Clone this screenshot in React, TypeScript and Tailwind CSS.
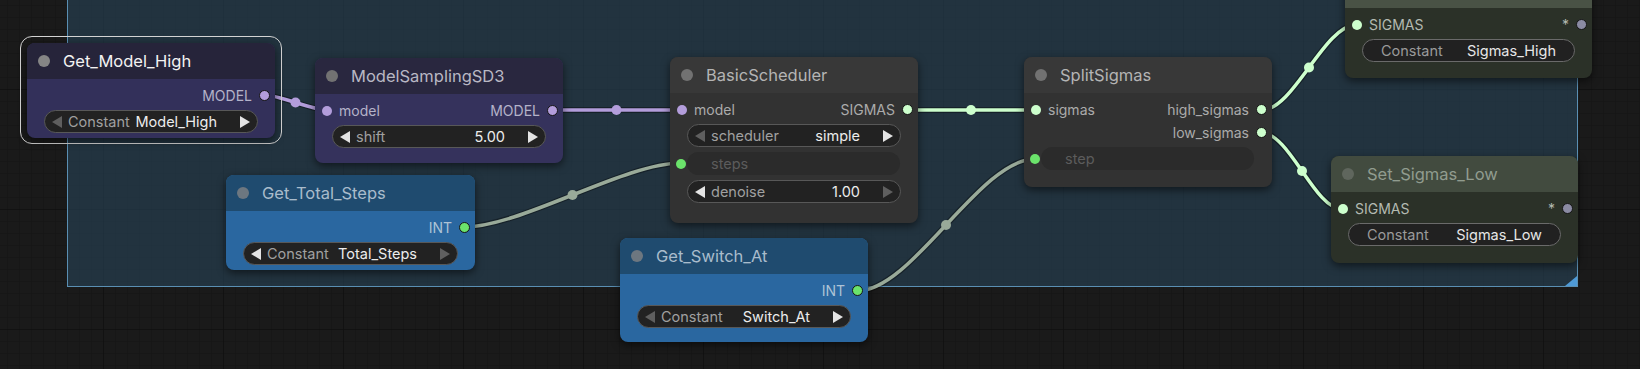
import { FC, ReactNode } from "react";

type Tone = "on" | "off";

const Arrow: FC<{ dir: "l" | "r"; tone: Tone }> = ({ dir, tone }) => (
  <svg width="10" height="12" viewBox="0 0 10 12" className="shrink-0">
    <polygon
      points={dir === "l" ? "10,0 10,12 0,6" : "0,0 0,12 10,6"}
      fill={tone === "on" ? "#e4e4e4" : "#5f5f5f"}
    />
  </svg>
);

const Dot: FC<{ color: string; ring?: boolean }> = ({ color, ring }) => (
  <span
    className={
      ring
        ? "block w-[11px] h-[11px] rounded-full border-[1.5px] border-[#161616] shrink-0"
        : "block w-[10px] h-[10px] rounded-full shrink-0"
    }
    style={{ background: color }}
  />
);

interface SlotRowProp {
  input?: { label: string; color: string };
  output?: { label: string; color: string };
  labelColor?: string;
}

const SlotRow: FC<SlotRowProp> = ({ input, output, labelColor = "text-[#ababab]" }) => {
  return <div className={`h-[23px] flex items-center text-[14px] ${labelColor}`}>
    {input ? (
      <div className="flex items-center pl-[7px] gap-[7px]">
        <Dot color={input.color} />
        <span>{input.label}</span>
      </div>
    ) : null}
    {output ? (
      <div className="ml-auto flex items-center pr-[5px] gap-[7px]">
        <span>{output.label}</span>
        <Dot color={output.color} ring />
      </div>
    ) : null}
  </div>
}

interface WidgetProp {
  label: string;
  value: string;
  left?: Tone;
  right?: Tone;
}

const Widget: FC<WidgetProp> = ({ label, value, left, right }) => {
  if (!left) {
    return <div className="h-[23px] mx-[17px] rounded-full bg-[#212121] border border-[#6a6a6a] flex items-center px-[18px] text-[14.5px]">
      <span className="text-[#9a9a9a]">{label}</span>
      <span className="ml-auto text-[#e6e6e6]">{value}</span>
    </div>
  }
  return <div className="h-[23px] mx-[17px] rounded-full bg-[#222222] border border-[#585858] flex items-center px-[7px] text-[14.5px]">
    <Arrow dir="l" tone={left} />
    <span className="ml-[6px] text-[#a0a0a0]">{label}</span>
    <span className="ml-auto mr-[23px] text-[#ececec]">{value}</span>
    <Arrow dir="r" tone={right ?? "on"} />
  </div>
}

const Converted: FC<{ label: string; color: string }> = ({ label, color }) => (
  <div className="h-[23px] flex items-center pl-[6px] pr-[18px]">
    <Dot color={color} />
    <div className="ml-[1px] flex-1 h-[23px] rounded-full bg-[#2b2b2b] flex items-center pl-[24px] text-[14.5px] text-[#5c5c5c]">
      {label}
    </div>
  </div>
);

interface NodeProp {
  title: string;
  pos: string;
  titleBg: string;
  bodyBg: string;
  titleColor: string;
  dotColor?: string;
  children: ReactNode;
}

const Node: FC<NodeProp> = ({ title, pos, titleBg, bodyBg, titleColor, dotColor = "bg-[#727272]", children }) => {
  return <div className={`absolute ${pos} rounded-[8px] overflow-hidden flex flex-col shadow-[0_3px_8px_rgba(0,0,0,0.55)] ${bodyBg}`}>
    <div className={`h-[36px] shrink-0 flex items-center pl-[11px] ${titleBg}`}>
      <span className={`w-[12px] h-[12px] rounded-full ${dotColor}`} />
      <span className={`ml-[13px] text-[16.5px] ${titleColor}`}>{title}</span>
    </div>
    <div className="pt-[5px] flex flex-col">
      {children}
    </div>
  </div>
}

const Widgets: FC<{ children: ReactNode }> = ({ children }) => (
  <div className="mt-[3px] flex flex-col gap-[5px]">{children}</div>
);

const MODEL = "#b39ddb";
const SIGMAS = "#cdffcd";
const INT = "#6be36b";
const ANY = "#8b8ba3";

type Link = { a: [number, number]; b: [number, number]; color: string };

const links: Link[] = [
  { a: [264, 95], b: [327, 110], color: MODEL },
  { a: [552, 110], b: [681, 110], color: MODEL },
  { a: [907, 110], b: [1035, 110], color: SIGMAS },
  { a: [1262, 110], b: [1356, 25], color: SIGMAS },
  { a: [1262, 133], b: [1342, 209], color: SIGMAS },
  { a: [464, 227], b: [681, 163], color: "#99aa99" },
  { a: [857, 291], b: [1035, 159], color: "#99aa99" },
];

function spline(l: Link) {
  const [x1, y1] = l.a;
  const [x2, y2] = l.b;
  const d = Math.hypot(x2 - x1, y2 - y1) * 0.25;
  const path = `M${x1} ${y1} C${x1 + d} ${y1}, ${x2 - d} ${y2}, ${x2} ${y2}`;
  // bezier at t = 0.5
  const mx = 0.125 * x1 + 0.375 * (x1 + d) + 0.375 * (x2 - d) + 0.125 * x2;
  const my = 0.5 * y1 + 0.5 * y2;
  return { path, mx, my };
}

const App: FC = () => {
  return <div className="relative w-[1640px] h-[369px] overflow-hidden bg-[#1a1a1a] font-['Inter',sans-serif]">
    <svg className="absolute inset-0" width="1640" height="369">
      <defs>
        <pattern id="fine" width="12" height="12" x="7" y="5" patternUnits="userSpaceOnUse">
          <path d="M12 0H0V12" fill="none" stroke="#141414" strokeWidth="1" />
        </pattern>
        <pattern id="major" width="120" height="120" x="103" y="89" patternUnits="userSpaceOnUse">
          <path d="M120 0H0V120" fill="none" stroke="#0f0f0f" strokeWidth="1.5" />
        </pattern>
      </defs>
      <rect width="1640" height="369" fill="url(#fine)" />
      <rect width="1640" height="369" fill="url(#major)" />
    </svg>

    {/* group */}
    <div className="absolute left-[67px] top-[-20px] w-[1511px] h-[307px] bg-[#284558]/60 border-[1.5px] border-[#5a8fb3]">
      <div className="absolute right-0 bottom-0 w-0 h-0 border-l-[12px] border-l-transparent border-b-[10px] border-b-[#4f9ad6]" />
    </div>

    <svg className="absolute inset-0" width="1640" height="369">
      {links.map((l, i) => {
        const s = spline(l);
        return <g key={i}>
          <path d={s.path} fill="none" stroke="#000" strokeOpacity="0.35" strokeWidth="6" />
          <path d={s.path} fill="none" stroke={l.color} strokeWidth="3.5" />
          <circle cx={s.mx} cy={s.my} r="5" fill={l.color} />
        </g>
      })}
    </svg>

    {/* selection outline */}
    <div className="absolute left-[20px] top-[36px] w-[262px] h-[108px] rounded-[12px] border-[1.5px] border-[#d4d4d4]" />

    <Node title="Get_Model_High" pos="left-[27px] top-[43px] w-[248px] h-[95px]" titleBg="bg-[#26243a]" bodyBg="bg-[#33305a]" titleColor="text-[#f2f2f2]" dotColor="bg-[#858585]">
      <SlotRow output={{ label: "MODEL", color: MODEL }} labelColor="text-[#b4b3c9]" />
      <Widgets>
        <Widget label="Constant" value="Model_High" left="off" right="on" />
      </Widgets>
    </Node>

    <Node title="ModelSamplingSD3" pos="left-[315px] top-[58px] w-[248px] h-[105px]" titleBg="bg-[#29273f]" bodyBg="bg-[#35325c]" titleColor="text-[#b9b8c4]">
      <SlotRow input={{ label: "model", color: MODEL }} output={{ label: "MODEL", color: MODEL }} labelColor="text-[#b4b3c9]" />
      <Widgets>
        <Widget label="shift" value="5.00" left="on" right="on" />
      </Widgets>
    </Node>

    <Node title="BasicScheduler" pos="left-[670px] top-[57px] w-[248px] h-[166px]" titleBg="bg-[#383838]" bodyBg="bg-[#323232]" titleColor="text-[#b4b4b4]">
      <SlotRow input={{ label: "model", color: MODEL }} output={{ label: "SIGMAS", color: SIGMAS }} />
      <Widgets>
        <Widget label="scheduler" value="simple" left="off" right="on" />
        <Converted label="steps" color={INT} />
        <Widget label="denoise" value="1.00" left="on" right="off" />
      </Widgets>
    </Node>

    <Node title="SplitSigmas" pos="left-[1024px] top-[57px] w-[248px] h-[130px]" titleBg="bg-[#383838]" bodyBg="bg-[#323232]" titleColor="text-[#b4b4b4]">
      <SlotRow input={{ label: "sigmas", color: SIGMAS }} output={{ label: "high_sigmas", color: SIGMAS }} />
      <SlotRow output={{ label: "low_sigmas", color: SIGMAS }} />
      <Widgets>
        <Converted label="step" color={INT} />
      </Widgets>
    </Node>

    {/* title bar of this node sits above the view */}
    <Node title="" pos="left-[1345px] top-[-28px] w-[247px] h-[106px]" titleBg="bg-[#495245]" bodyBg="bg-[#2b3128]" titleColor="text-[#9aa498]">
      <SlotRow input={{ label: "SIGMAS", color: SIGMAS }} output={{ label: "*", color: ANY }} labelColor="text-[#b3bab1]" />
      <Widgets>
        <Widget label="Constant" value="Sigmas_High" />
      </Widgets>
    </Node>

    <Node title="Set_Sigmas_Low" pos="left-[1331px] top-[156px] w-[247px] h-[107px]" titleBg="bg-[#424b3f]" bodyBg="bg-[#2b3128]" titleColor="text-[#919c8f]" dotColor="bg-[#5f665d]">
      <SlotRow input={{ label: "SIGMAS", color: SIGMAS }} output={{ label: "*", color: ANY }} labelColor="text-[#b3bab1]" />
      <Widgets>
        <Widget label="Constant" value="Sigmas_Low" />
      </Widgets>
    </Node>

    <Node title="Get_Total_Steps" pos="left-[226px] top-[175px] w-[249px] h-[95px]" titleBg="bg-[#1f4b6f]" bodyBg="bg-[#2a67a0]" titleColor="text-[#a9bccc]" dotColor="bg-[#6d7780]">
      <SlotRow output={{ label: "INT", color: INT }} labelColor="text-[#aec3d6]" />
      <Widgets>
        <Widget label="Constant" value="Total_Steps" left="on" right="off" />
      </Widgets>
    </Node>

    <Node title="Get_Switch_At" pos="left-[620px] top-[238px] w-[248px] h-[104px]" titleBg="bg-[#1f4b6f]" bodyBg="bg-[#2a67a0]" titleColor="text-[#a9bccc]" dotColor="bg-[#6d7780]">
      <SlotRow output={{ label: "INT", color: INT }} labelColor="text-[#aec3d6]" />
      <Widgets>
        <Widget label="Constant" value="Switch_At" left="off" right="on" />
      </Widgets>
    </Node>
  </div>
}

export default App;
